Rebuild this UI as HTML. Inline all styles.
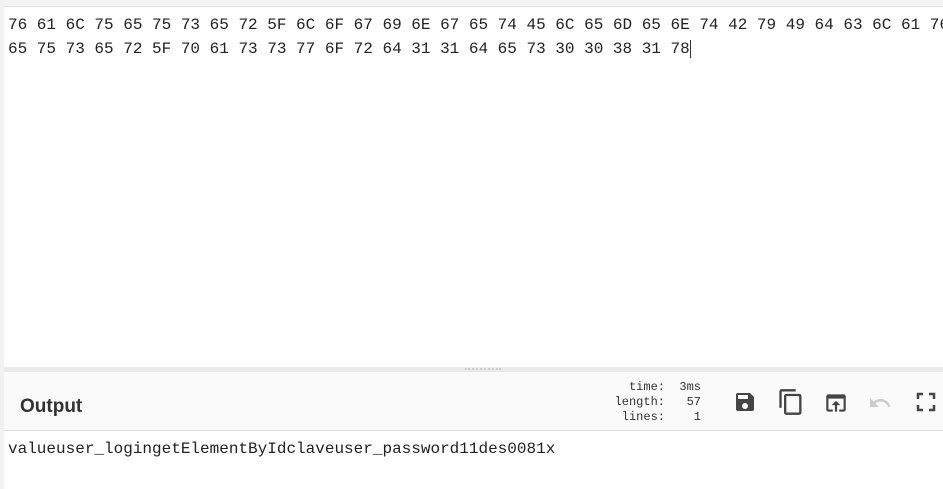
<!DOCTYPE html>
<html><head><meta charset="utf-8"><style>
body{margin:0;width:943px;height:489px;overflow:hidden;background:#fff;position:relative;font-family:"Liberation Sans",sans-serif}
.lb{position:absolute;left:0;top:0;width:4px;height:489px;background:#f2f2f2}
.top{position:absolute;left:4px;top:0;right:0;height:6px;background:#f4f4f4;border-bottom:1px solid #e2e2e2}
.mono{font-family:"Liberation Mono",monospace;font-size:16px;color:#222;white-space:pre;position:absolute;left:8px}
.sep{position:absolute;left:4px;right:0;top:367px;height:5px;background:#eaeaea}
.hdr{position:absolute;left:4px;right:0;top:372px;height:58px;background:#fafafa;border-bottom:1px solid #ddd}
.title{position:absolute;left:20px;top:396px;font-weight:bold;font-size:19px;color:#333}
.stats{position:absolute;left:600px;top:380px;font-family:"Liberation Mono",monospace;font-size:12px;line-height:15px;color:#333;white-space:pre;text-align:right;width:101px}
svg{position:absolute}
</style></head><body>
<div class="lb"></div><div class="top"></div>
<div class="mono" style="top:16px">76 61 6C 75 65 75 73 65 72 5F 6C 6F 67 69 6E 67 65 74 45 6C 65 6D 65 6E 74 42 79 49 64 63 6C 61 76</div>
<div class="mono" style="top:40px">65 75 73 65 72 5F 70 61 73 73 77 6F 72 64 31 31 64 65 73 30 30 38 31 78<span style="border-right:1px solid #333"></span></div>
<div class="sep"></div>
<div style="position:absolute;left:465px;top:368px;width:36px;height:2px;border-top:2px dotted #ccc"></div>
<div class="hdr"></div>
<div class="title">Output</div>
<div class="stats">time:  3ms
length:   57
lines:    1</div>
<svg style="left:733px;top:390px" width="24" height="24" viewBox="0 0 24 24"><path fill="#444" d="M17 3H5a2 2 0 0 0-2 2v14a2 2 0 0 0 2 2h14a2 2 0 0 0 2-2V7l-4-4zm-5 16a3 3 0 1 1 0-6 3 3 0 0 1 0 6zm3-10H5V5h10v4z"/></svg>
<svg style="left:777px;top:388px" width="28" height="28" viewBox="0 0 24 24"><path fill="#444" d="M16 1H4a2 2 0 0 0-2 2v14h2V3h12V1zm3 4H8a2 2 0 0 0-2 2v14a2 2 0 0 0 2 2h11a2 2 0 0 0 2-2V7a2 2 0 0 0-2-2zm0 16H8V7h11v14z"/></svg>
<svg style="left:823px;top:390px" width="26" height="26" viewBox="0 0 24 24"><path fill="#444" d="M19 4H5a2 2 0 0 0-2 2v12a2 2 0 0 0 2 2h4v-2H5V8h14v10h-4v2h4a2 2 0 0 0 2-2V6a2 2 0 0 0-2-2zm-7 6l-4 4h3v6h2v-6h3l-4-4z"/></svg>
<svg style="left:866px;top:391px" width="28" height="24" viewBox="0 0 24 24"><path fill="#ccc" d="M12.5 8c-2.65 0-5.05 1-6.9 2.6L2 7v9h9l-3.62-3.62A8 8 0 0 1 20.2 16l2.37-.78A10.5 10.5 0 0 0 12.5 8z"/></svg>
<svg style="left:916px;top:392px" width="20" height="20" viewBox="0 0 20 20"><path fill="none" stroke="#444" stroke-width="2.5" d="M2 7V2h5M13 2h5v5M18 13v5h-5M7 18H2v-5"/></svg>
<div class="mono" style="top:440px">valueuser_logingetElementByIdclaveuser_password11des0081x</div>
</body></html>
